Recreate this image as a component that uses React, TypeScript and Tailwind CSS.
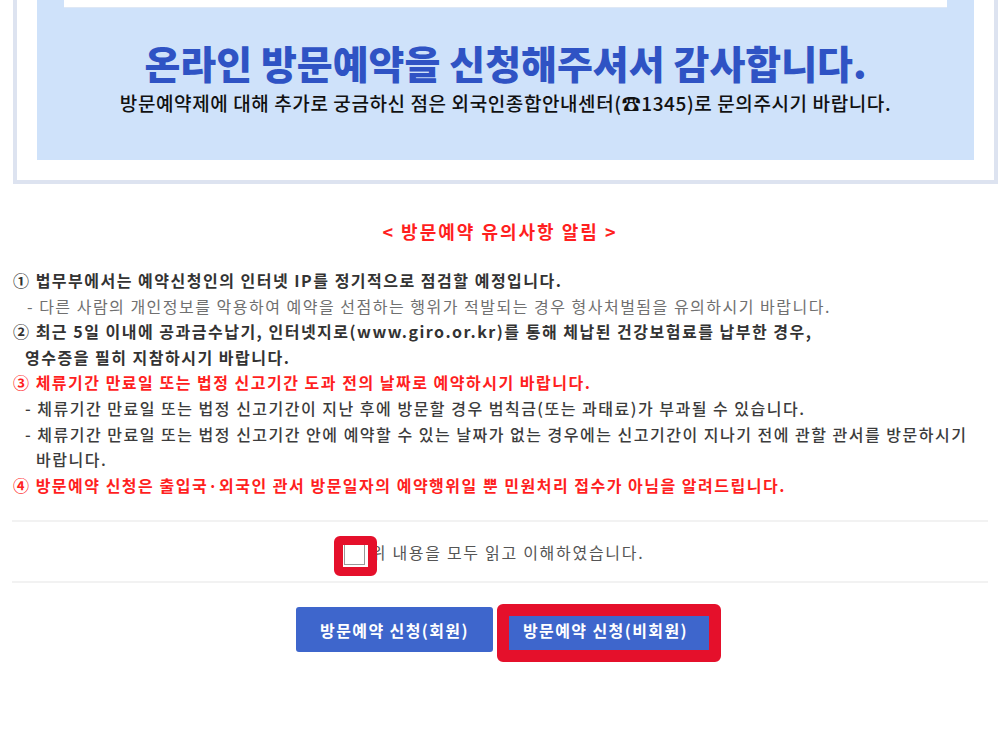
const font = { fontFamily: '"Noto Sans CJK KR", "Noto Sans", sans-serif' };

type Line = { text: string; tone: 'bold' | 'sub' | 'red' | 'plain'; indent?: string };

const notices: Line[] = [
    { text: '① 법무부에서는 예약신청인의 인터넷 IP를 정기적으로 점검할 예정입니다.', tone: 'bold' },
    { text: '- 다른 사람의 개인정보를 악용하여 예약을 선점하는 행위가 적발되는 경우 형사처벌됨을 유의하시기 바랍니다.', tone: 'sub', indent: 'pl-[14px]' },
    { text: '② 최근 5일 이내에 공과금수납기, 인터넷지로(www.giro.or.kr)를 통해 체납된 건강보험료를 납부한 경우,', tone: 'bold' },
    { text: '영수증을 필히 지참하시기 바랍니다.', tone: 'bold', indent: 'pl-[12px]' },
    { text: '③ 체류기간 만료일 또는 법정 신고기간 도과 전의 날짜로 예약하시기 바랍니다.', tone: 'red' },
    { text: '- 체류기간 만료일 또는 법정 신고기간이 지난 후에 방문할 경우 범칙금(또는 과태료)가 부과될 수 있습니다.', tone: 'plain', indent: 'pl-[12px]' },
    { text: '- 체류기간 만료일 또는 법정 신고기간 안에 예약할 수 있는 날짜가 없는 경우에는 신고기간이 지나기 전에 관할 관서를 방문하시기', tone: 'plain', indent: 'pl-[12px]' },
    { text: '바랍니다.', tone: 'plain', indent: 'pl-[23px]' },
    { text: '④ 방문예약 신청은 출입국·외국인 관서 방문일자의 예약행위일 뿐 민원처리 접수가 아님을 알려드립니다.', tone: 'red' },
];

const toneClass = {
    bold: 'font-bold text-[#333]',
    sub: 'font-normal text-[#707070]',
    red: 'font-bold text-[#ff1f1f]',
    plain: 'font-medium text-[#3c3c3c]',
};

export default function App() {
    return (
        <div className="w-[1000px] h-[750px] bg-white overflow-hidden" style={font}>
            {/* 상단 안내 박스 */}
            <div className="ml-[13px] w-[985px] border-4 border-t-0 border-[#dde3f0] px-[20px] pb-[20px]">
                <div className="bg-[#cfe2fa] px-[27px] pb-[45px]">
                    <div className="h-[8px] bg-white border-b border-[#dfe8f5]" />
                    <h1 className="mt-[32px] text-center text-[39px] leading-[44px] font-black text-[#2f53c4]">
                        온라인 방문예약을 신청해주셔서 감사합니다.
                    </h1>
                    <p className="mt-[7px] text-center text-[19px] leading-[24px] font-medium tracking-[0.6px] text-[#111]">
                        방문예약제에 대해 추가로 궁금하신 점은 외국인종합안내센터(☎1345)로 문의주시기 바랍니다.
                    </p>
                </div>
            </div>

            {/* 유의사항 */}
            <div className="mt-[35px] text-center text-[18px] leading-[24px] font-bold tracking-[2px] text-[#ff1f1f]">
                &lt; 방문예약 유의사항 알림 &gt;
            </div>

            <div className="mt-[25px] pl-[13px] text-[16px] leading-[25.6px] tracking-[1.5px]">
                {notices.map((line, i) => (
                    <div key={i} className={`${toneClass[line.tone]} ${line.indent ?? ''} whitespace-nowrap`}>
                        {line.text}
                    </div>
                ))}
            </div>

            {/* 동의 체크 */}
            <div className="mt-[22px] mx-[12px] border-t-2 border-b-2 border-[#f2f2f2] h-[63px] flex items-center justify-center pr-[12px]">
                <div className="relative w-[21px] h-[21px] mt-[6px] border border-[#999] bg-white">
                    <div className="absolute -left-[11px] -top-[9px] w-[43px] h-[40px] border-[9px] border-[#e5102b] rounded-[6px]" />
                </div>
                <span className="ml-[6px] text-[16px] tracking-[1.7px] text-[#555]">위 내용을 모두 읽고 이해하였습니다.</span>
            </div>

            {/* 버튼 */}
            <div className="mt-[24px] flex justify-center gap-[6px] pl-[8px]">
                <button className="h-[45px] px-[24px] rounded-[3px] bg-[#3e66cc] text-white text-[16px] font-bold tracking-[1.4px]">
                    방문예약 신청(회원)
                </button>
                <div className="relative">
                    <button className="h-[45px] px-[24px] rounded-[3px] bg-[#3e66cc] text-white text-[16px] font-bold tracking-[1.4px]">
                        방문예약 신청(비회원)
                    </button>
                    <div className="absolute -left-[2px] -top-[3px] -right-[9px] -bottom-[10px] border-[12px] border-[#e5102b] rounded-[6px]" />
                </div>
            </div>
        </div>
    );
}
